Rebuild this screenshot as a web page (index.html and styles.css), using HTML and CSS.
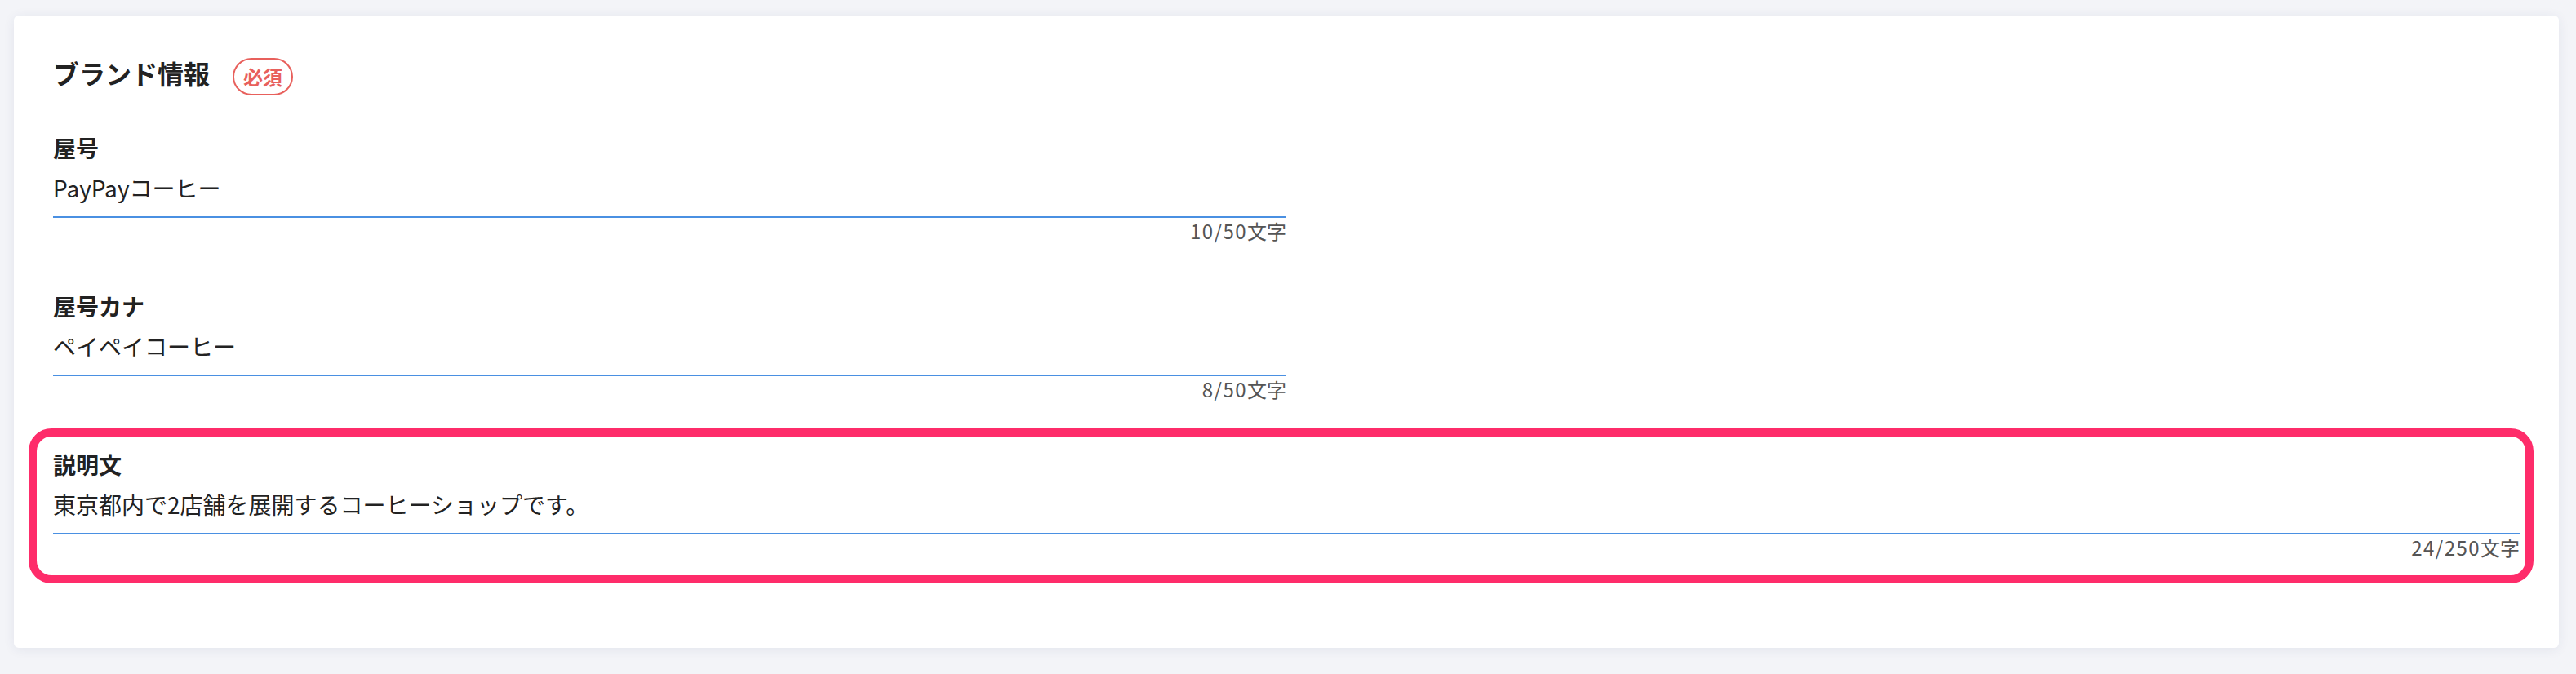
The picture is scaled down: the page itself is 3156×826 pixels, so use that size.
FILE: index.html
```html
<!DOCTYPE html>
<html lang="ja">
<head>
<meta charset="utf-8">
<title>ブランド情報</title>
<link rel="stylesheet" href="styles.css">
</head>
<body>
<div class="page">
  <section class="card">
    <header class="card-head">
      <h2 class="card-title">ブランド情報</h2>
      <span class="badge">必須</span>
    </header>
    <div class="fields">
      <div class="field field-half">
        <div class="field-label">屋号</div>
        <div class="field-input">PayPayコーヒー</div>
        <div class="field-count"><span class="num">10/50</span>文字</div>
      </div>
      <div class="field field-half">
        <div class="field-label">屋号カナ</div>
        <div class="field-input">ペイペイコーヒー</div>
        <div class="field-count"><span class="num">8/50</span>文字</div>
      </div>
      <div class="field field-full">
        <div class="field-label">説明文</div>
        <div class="field-input">東京都内で2店舗を展開するコーヒーショップです。</div>
        <div class="field-count"><span class="num">24/250</span>文字</div>
        <span class="highlight"></span>
      </div>
    </div>
  </section>
</div>
</body>
</html>
```
FILE: styles.css
```css
html, body {
  margin: 0;
  padding: 0;
}

body {
  background: #f3f4f8;
  font-family: "Noto Sans CJK JP", "Noto Sans", sans-serif;
  color: #222222;
}

.page {
  padding: 19px 21px 30px 17px;
}

.card {
  background: #ffffff;
  border-radius: 6px;
  box-shadow: 0 2px 14px rgba(40, 50, 100, 0.08);
  padding: 48px 48px 107px;
}

.card-head {
  display: flex;
  align-items: flex-start;
}

.card-title {
  margin: 0;
  font-size: 32px;
  line-height: 44px;
  font-weight: 700;
  color: #222222;
}

.badge {
  margin-left: 28px;
  margin-top: 4px;
  border: 2px solid #e8605c;
  color: #e8605c;
  border-radius: 999px;
  font-size: 24px;
  font-weight: 700;
  line-height: 42px;
  padding: 0 11px;
}

.fields {
  display: flex;
  flex-direction: column;
  gap: 56px;
  margin-top: 44px;
}

.field {
  position: relative;
}

.field-half {
  width: 50%;
}

.field-label {
  font-size: 28px;
  font-weight: 700;
  line-height: 40px;
  margin-bottom: 9px;
  color: #222222;
}

.field-input {
  font-size: 28px;
  line-height: 40px;
  padding-bottom: 15px;
  border-bottom: 2px solid #4a90e2;
  color: #222222;
}

.field-count {
  text-align: right;
  font-size: 24px;
  line-height: 32px;
  margin-top: 0;
  color: #555555;
}

.field-count .num {
  letter-spacing: 0.06em;
}

.highlight {
  position: absolute;
  top: -24px;
  left: -30px;
  right: -17px;
  bottom: -28px;
  border: 10px solid #fe2c6a;
  border-radius: 28px;
  pointer-events: none;
}
```
